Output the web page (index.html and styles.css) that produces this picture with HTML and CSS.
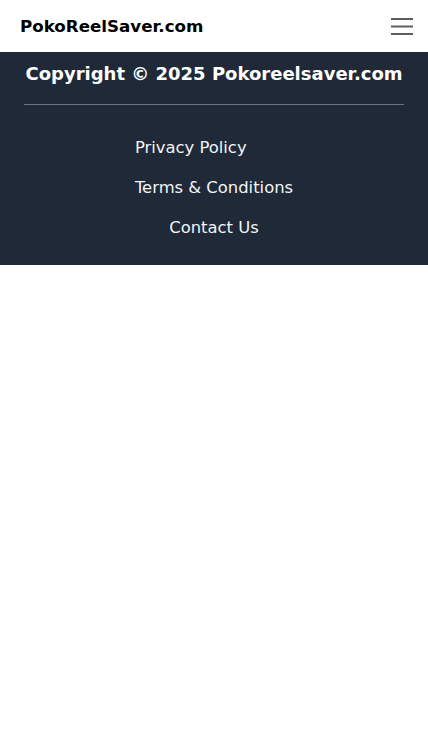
FILE: index.html
```html
<!DOCTYPE html>
<html lang="en">

<head>
    <meta charset="UTF-8">
    <meta name="viewport" content="width=device-width, initial-scale=1.0">
    <title>PokoReelSaver.com</title>
    <link rel="stylesheet" href="styles.css">
</head>

<body>
    <nav class="navbar">
        <a class="brand" href="#">PokoReelSaver.com</a>
        <button class="toggler" aria-label="Menu">
            <svg width="22" height="18" viewBox="0 0 22 18">
                <path d="M0 2h22M0 9.5h22M0 17h22" stroke="#5a5e63" stroke-width="2" />
            </svg>
        </button>
    </nav>

    <footer class="footer">
        <p class="copyright">Copyright © 2025 Pokoreelsaver.com</p>
        <hr class="divider">
        <div class="links">
            <div class="links-group">
                <a href="#">Privacy Policy</a>
                <a href="#">Terms &amp; Conditions</a>
            </div>
            <a href="#">Contact Us</a>
        </div>
    </footer>
</body>

</html>
```

FILE: styles.css
```css
body {
    margin: 0;
    font-family: "DejaVu Sans", sans-serif;
    background-color: #fff;
}

a {
    text-decoration: none;
}

.navbar {
    height: 52px;
    display: flex;
    align-items: center;
    justify-content: space-between;
    padding: 0 15px 0 20px;
}

.brand {
    color: #000;
    font-size: 16.7px;
    font-weight: bold;
    padding-bottom: 1px;
}

.toggler {
    border: none;
    background: none;
    padding: 0;
    display: flex;
}

.footer {
    background-color: #1f2937;
    padding: 8px 24px 26px;
    color: #fff;
}

.copyright {
    margin: 0;
    text-align: center;
    font-size: 18px;
    font-weight: bold;
    line-height: 28px;
    white-space: nowrap;
}

.divider {
    border: none;
    border-top: 1px solid #6b7280;
    margin: 16px 0 32px;
}

.links {
    display: flex;
    flex-direction: column;
    align-items: center;
    gap: 18px;
}

.links-group {
    display: flex;
    flex-direction: column;
    gap: 18px;
}

.links a {
    color: #f3f4f6;
    font-size: 16.4px;
    line-height: 22px;
}
```
